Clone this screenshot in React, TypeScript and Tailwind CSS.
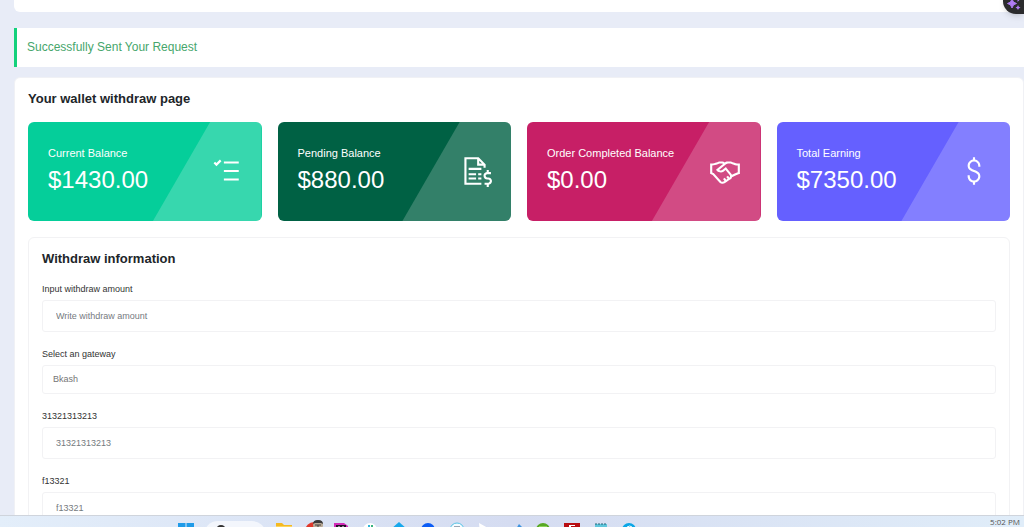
import React from 'react';
import type { IconType } from 'react-icons';
import { LiaDollarSignSolid, LiaFileInvoiceDollarSolid, LiaHandshakeSolid, LiaTasksSolid } from 'react-icons/lia';

interface Stat {
  label: string;
  amount: string;
  color: string;
  icon: IconType;
}

const stats: Stat[] = [
  { label: 'Current Balance', amount: '$1430.00', color: 'bg-[#05ce9a]', icon: LiaTasksSolid },
  { label: 'Pending Balance', amount: '$880.00', color: 'bg-[#006144]', icon: LiaFileInvoiceDollarSolid },
  { label: 'Order Completed Balance', amount: '$0.00', color: 'bg-[#c71f66]', icon: LiaHandshakeSolid },
  { label: 'Total Earning', amount: '$7350.00', color: 'bg-[#6560ff]', icon: LiaDollarSignSolid },
];

const StatCard: React.FC<{ stat: Stat }> = ({ stat }) => {
  const Icon = stat.icon;
  return (
    <div className={`relative flex h-[99px] items-center justify-between overflow-hidden rounded-md pb-0.5 pl-5 pr-[19px] text-white ${stat.color}`}>
      <div className="absolute inset-0 bg-white/20 [clip-path:polygon(78%_0,100%_0,100%_100%,53.5%_100%)]" />
      <div className="relative">
        <p className="text-[11px] leading-4">{stat.label}</p>
        <p className="mt-[3px] text-2xl leading-8">{stat.amount}</p>
      </div>
      <Icon className="relative size-[34px]" />
    </div>
  );
};

const fieldClass = 'block w-full rounded-[3px] border border-[#f2f2f4] bg-white text-[9px] text-[#757575] placeholder:text-[#757a80] outline-none';

const TextField: React.FC<{ id: string; label: string; placeholder: string }> = ({ id, label, placeholder }) => (
  <div>
    <label htmlFor={id} className="block text-[9px] leading-3 text-[#333]">{label}</label>
    <input id={id} type="text" placeholder={placeholder} className={`mt-[5px] h-8 px-[13px] ${fieldClass}`} />
  </div>
);

const taskbarIcons = [
  {
    name: 'File Explorer',
    art: (
      <>
        <path d="M0 0h6l2 2h8v12H0z" fill="#f5b921" />
        <path d="M0 3h16v11H0z" fill="#fbd65e" />
      </>
    ),
  },
  {
    name: 'Chrome',
    art: (
      <>
        <circle cx="9" cy="8" r="9" fill="#e0392b" />
        <circle cx="13" cy="2" r="5" fill="#b9a995" />
        <path d="M8 1q0-4 5-4t5 4l-2-1h-6z" fill="#3a3a3a" />
        <path d="M10 2h6M13 2v4" stroke="#444" />
      </>
    ),
  },
  {
    name: 'PhpStorm',
    art: (
      <>
        <path d="M0 0h10l4 3v9H0z" fill="#d32bb8" />
        <path d="M2 2h10v10H2z" fill="#221126" />
        <path d="M4 4h2M8 4h2" stroke="#fff" />
      </>
    ),
  },
  {
    name: 'Slack',
    art: (
      <>
        <circle cx="7" cy="7" r="7" fill="#fff" />
        <path d="M5 2h2v2H5z" fill="#31b6d8" />
        <path d="M8 2h2v2H8z" fill="#35b37e" />
      </>
    ),
  },
  { name: 'Store', art: <path d="M8-1 16 6v6H0V6z" fill="#17a8ec" /> },
  { name: 'Messenger', art: <circle cx="8" cy="7" r="7" fill="#0b5cf5" /> },
  {
    name: 'Browser',
    art: (
      <>
        <circle cx="8" cy="7" r="7" fill="#f5fbff" stroke="#55c3e6" />
        <path d="M5 3h6v4H5z" fill="#9aa7b5" />
      </>
    ),
  },
  { name: 'Player', art: <path d="m1 0 9 5-8 6z" fill="#fff" /> },
  { name: 'Code', art: <path d="m12 1 4 4v6H6z" fill="#3d93e0" /> },
  {
    name: 'Upwork',
    art: (
      <>
        <circle cx="8" cy="7" r="7" fill="#57a823" />
        <path d="M4 3h8v2H4z" fill="#8bd05b" />
      </>
    ),
  },
  {
    name: 'FileZilla',
    art: (
      <>
        <path d="M0 0h16v14H0z" fill="#b80d12" />
        <path d="M5 2h6v1H7v9H5z" fill="#fff" />
      </>
    ),
  },
  {
    name: 'Notepad',
    art: (
      <>
        <path d="M2 1h12v12H2z" fill="#5fc6dc" />
        <path d="M3 0v2M6 0v2M9 0v2M12 0v2" stroke="#24657a" />
      </>
    ),
  },
  {
    name: 'Skype',
    art: (
      <>
        <circle cx="7" cy="7" r="7" fill="#0aa6e6" />
        <path d="M5 4q3-2 5 0" stroke="#fff" fill="none" />
      </>
    ),
  },
];

const Taskbar: React.FC = () => (
  <footer className="flex h-3 shrink-0 items-start overflow-hidden border-t border-[#cfd4dc] bg-linear-to-r from-[#e3eefa] via-[#d5dcf1] to-[#e0edf9]">
    <div className="flex w-[270px] shrink-0 items-start justify-end">
      <button aria-label="Start" className="mt-[7px] shrink-0">
        <svg viewBox="0 0 16 16" className="size-4">
          <path d="M0 0h7.500v7.500H0zM8.500 0H16v7.500H8.500zM0 8.500h7.500V16H0zM8.500 8.500H16V16H8.500z" fill="#1f9be8" />
        </svg>
      </button>
      <button aria-label="Search" className="ml-2.5 mr-1 mt-[5px] h-7 w-[62px] shrink-0 rounded-full bg-[#f3f6fc]">
        <svg viewBox="0 0 62 28" className="block h-7 w-[62px]">
          <circle cx="17" cy="9" r="4" fill="none" stroke="#333" strokeWidth="2" />
        </svg>
      </button>
    </div>
    <div className="grid w-[374px] shrink-0 grid-cols-13 justify-items-center">
      {taskbarIcons.map((icon) => (
        <button key={icon.name} aria-label={icon.name} className="mt-[7px]">
          <svg viewBox="0 0 16 16" className="size-4 overflow-visible">{icon.art}</svg>
        </button>
      ))}
    </div>
    <time className="ml-auto mr-1 mt-px whitespace-nowrap font-['Open_Sans',sans-serif] text-[8px] leading-[10px] text-[#555]">5:02 PM</time>
  </footer>
);

const App: React.FC = () => {
  return (
    <div className="relative flex h-screen flex-col overflow-hidden bg-[#e8ecf7] font-['Liberation_Sans',Arial,sans-serif]">
      <main className="min-h-0 flex-1 overflow-hidden pl-3.5">
        <div className="h-3 rounded-b-md bg-white" />

        <div role="status" className="mt-4 border-l-[3px] border-[#13d17c] bg-white px-2.5 py-[11px] text-[12px] leading-[17px] text-[#47a66c]">
          Successfully Sent Your Request
        </div>

        <section className="mt-2.5 rounded-md border border-[#f0f1f5] bg-white px-[13px] pt-[11px]">
          <h1 className="text-[13px] font-bold leading-5 text-[#212529]">Your wallet withdraw page</h1>

          <div className="mt-[13px] grid grid-cols-4 gap-4">
            {stats.map((stat) => (
              <StatCard key={stat.label} stat={stat} />
            ))}
          </div>

          <div className="mt-4 rounded-md border border-[#f2f2f4] px-[13px] pt-[11px]">
            <h2 className="text-[13px] font-bold leading-5 text-[#212529]">Withdraw information</h2>
            <form className="mt-[14px] flex flex-col gap-4 pb-4">
              <TextField id="amount" label="Input withdraw amount" placeholder="Write withdraw amount" />
              <div>
                <label htmlFor="gateway" className="block text-[9px] leading-3 text-[#333]">Select an gateway</label>
                <select id="gateway" className={`mt-[5px] h-[29px] appearance-none px-2.5 ${fieldClass}`}>
                  <option>Bkash</option>
                </select>
              </div>
              <TextField id="account" label="31321313213" placeholder="31321313213" />
              <TextField id="reference" label="f13321" placeholder="f13321" />
            </form>
          </div>
        </section>
      </main>

      {/* Assistant launcher */}
      <button aria-label="Assistant" className="absolute -top-3 right-0 h-[26px] w-[21px] rounded-l-[13px] bg-[#2b2b2d] shadow-md">
        <svg viewBox="0 0 21 26" className="block h-[26px] w-[21px]" fill="#b07cf5">
          <path d="M9 11q.8 4 4.500 4.500Q9.800 16 9 20q-.8-4-4.500-4.500Q8.200 15 9 11z" stroke="#b07cf5" />
          <path d="M15 17q.4 2 2.500 2.500-2.100.5-2.500 2.500-.4-2-2.500-2.500 2.100-.5 2.500-2.500zM14.500 10.500q.3 1.500 2 2-1.700.5-2 1.500z" />
        </svg>
      </button>

      <Taskbar />
    </div>
  );
};

export default App;
